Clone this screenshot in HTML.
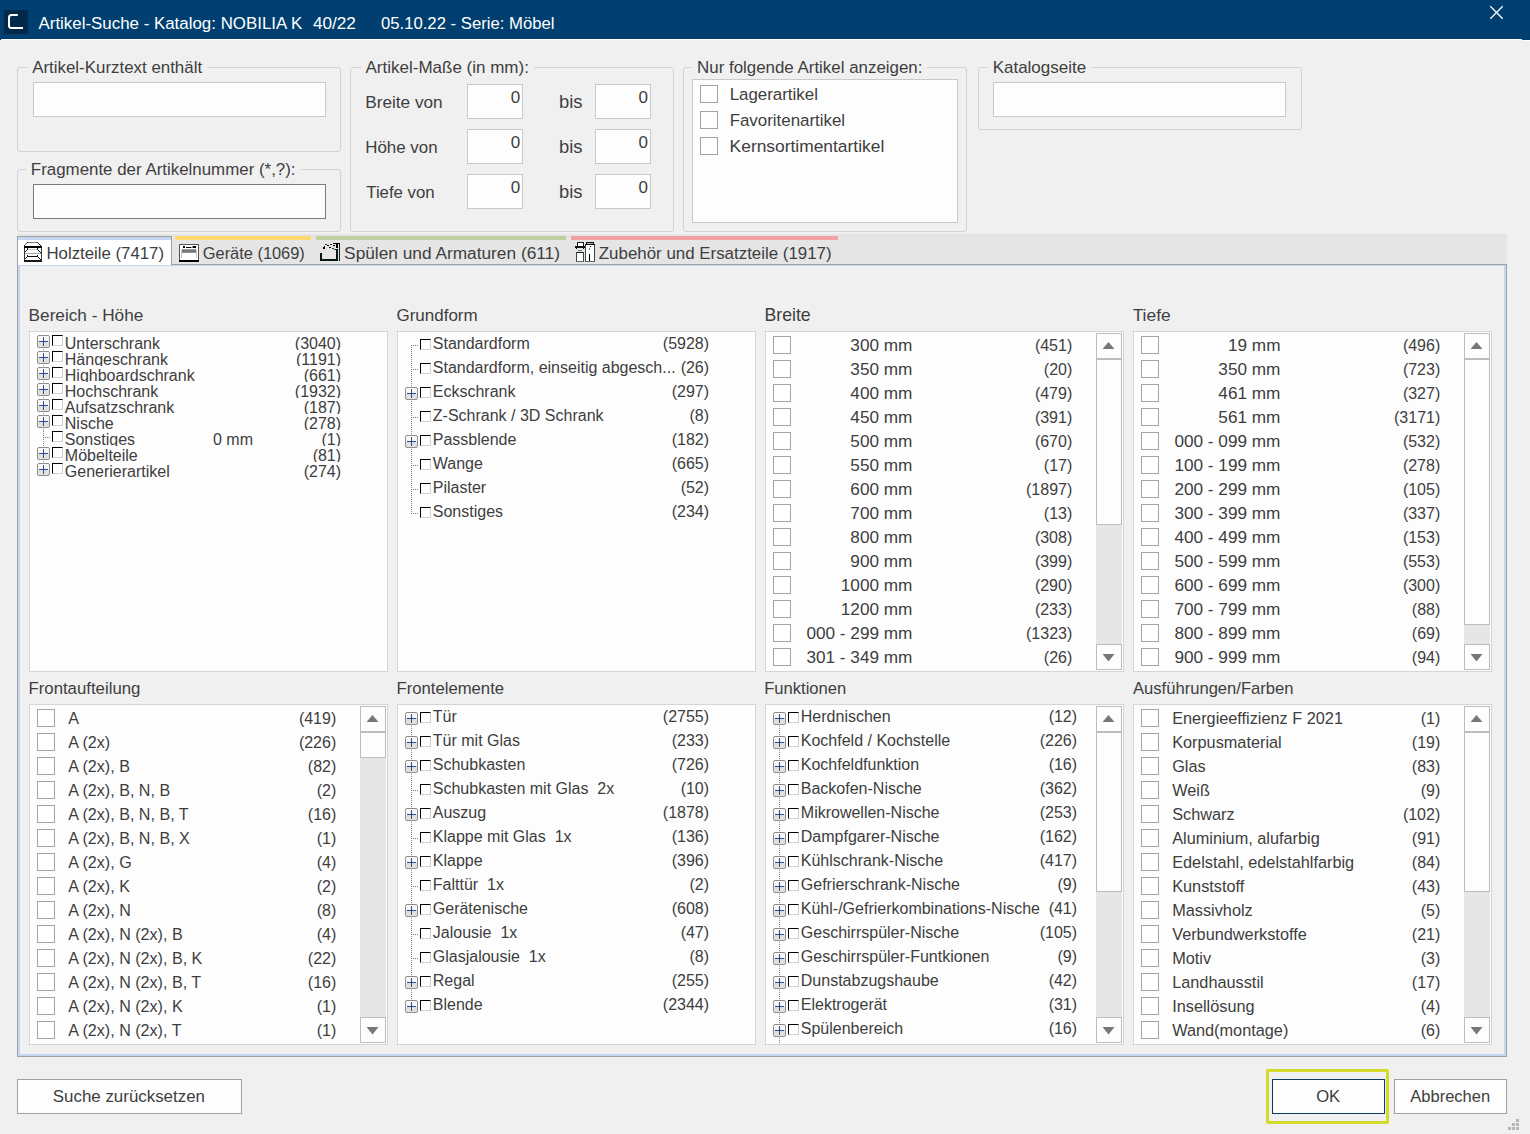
<!DOCTYPE html><html><head><meta charset="utf-8"><title>Artikel-Suche</title><style>
html,body{margin:0;padding:0;}
body{width:1530px;height:1134px;position:relative;overflow:hidden;background:#f0f0f0;font-family:"Liberation Sans", sans-serif;color:#3e3e3e;}
div,svg{position:absolute;}
i{position:absolute;display:block;}
.t{white-space:pre;line-height:20px;}
.pb{width:13px;height:13px;box-sizing:border-box;border:1px solid #8e8e8e;border-radius:2px;
  background:linear-gradient(to bottom,#fafafa 0,#f4f4f4 50%,#dedede 50%,#e2e2e2 100%);}
.ph{left:1px;top:5px;width:9px;height:1px;background:#2f4b8f;}
.pv{left:5px;top:1px;width:1px;height:9px;background:#2f4b8f;}
.tc{width:11px;height:11px;box-sizing:border-box;border-style:solid;border-width:1px;
  border-color:#000 #d0d0d0 #d0d0d0 #000;background:#fff;}
</style></head><body><div style="left:0px;top:0px;width:1530px;height:39px;background:#003f6f"></div>
<div style="left:1px;top:39px;width:1521px;height:1px;background:#ffffff"></div>
<div style="left:0px;top:39px;width:1px;height:1px;background:#003f6f"></div>
<div style="left:1522px;top:39px;width:8px;height:1px;background:#003f6f"></div>
<div style="left:1522px;top:40px;width:8px;height:1px;background:#ffffff"></div>
<div style="left:4px;top:10px;width:24px;height:24px;background:#02294a;border-radius:1px"></div>
<svg style="left:4px;top:10px" width="24" height="24" viewBox="0 0 24 24"><path d="M13.8 5 H7.5 Q5 5 5 7.5 V15.5 Q5 18 7.5 18 H19" fill="none" stroke="#fff" stroke-width="2"/></svg>
<div class="t" style="top:14px;font-size:16.9px;color:#ffffff;left:38.50px;">Artikel-Suche - Katalog: NOBILIA K</div>
<div class="t" style="top:13px;font-size:17.2px;color:#ffffff;left:312.91px;">40/22</div>
<div class="t" style="top:14px;font-size:16.7px;color:#ffffff;left:380.97px;">05.10.22 - Serie: Möbel</div>
<svg style="left:1488px;top:4px" width="18" height="18" viewBox="0 0 18 18"><path d="M2.3 2.3 L14.7 14.7 M14.7 2.3 L2.3 14.7" stroke="#fff" stroke-width="1.3"/></svg>
<div style="left:17px;top:67px;width:324px;height:85px;border:1px solid #d3d3d3;box-sizing:border-box;border-radius:3px;"></div>
<div class="t" style="top:58px;font-size:16.9px;color:#3e3e3e;left:32.20px;background:#f0f0f0;padding:0 5px;margin-left:-5px;">Artikel-Kurztext enthält</div>
<div style="left:17px;top:169px;width:324px;height:63px;border:1px solid #d3d3d3;box-sizing:border-box;border-radius:3px;"></div>
<div class="t" style="top:160px;font-size:16.9px;color:#3e3e3e;left:30.85px;background:#f0f0f0;padding:0 5px;margin-left:-5px;">Fragmente der Artikelnummer (*,?):</div>
<div style="left:350px;top:67px;width:324px;height:165px;border:1px solid #d3d3d3;box-sizing:border-box;border-radius:3px;"></div>
<div class="t" style="top:58px;font-size:17.0px;color:#3e3e3e;left:365.50px;background:#f0f0f0;padding:0 5px;margin-left:-5px;">Artikel-Maße (in mm):</div>
<div style="left:683px;top:67px;width:284px;height:165px;border:1px solid #d3d3d3;box-sizing:border-box;border-radius:3px;"></div>
<div class="t" style="top:58px;font-size:16.9px;color:#3e3e3e;left:697.05px;background:#f0f0f0;padding:0 5px;margin-left:-5px;">Nur folgende Artikel anzeigen:</div>
<div style="left:978px;top:67px;width:324px;height:63px;border:1px solid #d3d3d3;box-sizing:border-box;border-radius:3px;"></div>
<div class="t" style="top:58px;font-size:17px;color:#3e3e3e;left:992.64px;background:#f0f0f0;padding:0 5px;margin-left:-5px;">Katalogseite</div>
<div style="left:33px;top:82px;width:293px;height:35px;border:1px solid #c9c9c9;box-sizing:border-box;background:#fdfdfd;"></div>
<div style="left:33px;top:184px;width:293px;height:35px;border:1px solid #7a7a7a;box-sizing:border-box;background:#fdfdfd;"></div>
<div class="t" style="top:92px;font-size:17.2px;color:#3e3e3e;left:365.22px;">Breite von</div>
<div class="t" style="top:92px;font-size:18.4px;color:#3e3e3e;left:558.95px;">bis</div>
<div style="left:467px;top:84px;width:56px;height:35px;border:1px solid #c9c9c9;box-sizing:border-box;background:#fdfdfd;"></div>
<div style="left:595px;top:84px;width:56px;height:35px;border:1px solid #c9c9c9;box-sizing:border-box;background:#fdfdfd;"></div>
<div class="t" style="top:88px;font-size:17px;color:#3e3e3e;right:1009.84px;text-align:right;">0</div>
<div class="t" style="top:88px;font-size:17px;color:#3e3e3e;right:881.94px;text-align:right;">0</div>
<div class="t" style="top:138px;font-size:16.9px;color:#3e3e3e;left:365.25px;">Höhe von</div>
<div class="t" style="top:137px;font-size:18.4px;color:#3e3e3e;left:558.95px;">bis</div>
<div style="left:467px;top:129px;width:56px;height:35px;border:1px solid #c9c9c9;box-sizing:border-box;background:#fdfdfd;"></div>
<div style="left:595px;top:129px;width:56px;height:35px;border:1px solid #c9c9c9;box-sizing:border-box;background:#fdfdfd;"></div>
<div class="t" style="top:133px;font-size:17px;color:#3e3e3e;right:1009.84px;text-align:right;">0</div>
<div class="t" style="top:133px;font-size:17px;color:#3e3e3e;right:881.94px;text-align:right;">0</div>
<div class="t" style="top:183px;font-size:16.8px;color:#3e3e3e;left:366.26px;">Tiefe von</div>
<div class="t" style="top:182px;font-size:18.4px;color:#3e3e3e;left:558.95px;">bis</div>
<div style="left:467px;top:174px;width:56px;height:35px;border:1px solid #c9c9c9;box-sizing:border-box;background:#fdfdfd;"></div>
<div style="left:595px;top:174px;width:56px;height:35px;border:1px solid #c9c9c9;box-sizing:border-box;background:#fdfdfd;"></div>
<div class="t" style="top:178px;font-size:17px;color:#3e3e3e;right:1009.84px;text-align:right;">0</div>
<div class="t" style="top:178px;font-size:17px;color:#3e3e3e;right:881.94px;text-align:right;">0</div>
<div style="left:692px;top:79px;width:266px;height:144px;border:1px solid #c9c9c9;box-sizing:border-box;background:#fdfdfd;"></div>
<div style="left:700px;top:85px;width:18px;height:18px;border:1px solid #a3a3a3;box-sizing:border-box;background:#ffffff;"></div>
<div class="t" style="top:85px;font-size:16.9px;color:#3e3e3e;left:729.65px;">Lagerartikel</div>
<div style="left:700px;top:111px;width:18px;height:18px;border:1px solid #a3a3a3;box-sizing:border-box;background:#ffffff;"></div>
<div class="t" style="top:111px;font-size:16.9px;color:#3e3e3e;left:729.65px;">Favoritenartikel</div>
<div style="left:700px;top:137px;width:18px;height:18px;border:1px solid #a3a3a3;box-sizing:border-box;background:#ffffff;"></div>
<div class="t" style="top:136px;font-size:17.4px;color:#3e3e3e;left:729.61px;">Kernsortimentartikel</div>
<div style="left:993px;top:82px;width:293px;height:35px;border:1px solid #c9c9c9;box-sizing:border-box;background:#fdfdfd;"></div>
<div style="left:17px;top:234px;width:1490px;height:30px;background:#e5e5e5"></div>
<div style="left:17px;top:264px;width:1490px;height:793px;border:1px solid #a0a0a0;box-sizing:border-box;background:#f0f0f0"></div>
<div style="left:18px;top:265px;width:1488px;height:791px;border-style:solid;border-color:#c5d5f2;border-width:1px 2px 2px 2px;box-sizing:border-box"></div>
<div style="left:17px;top:236px;width:155px;height:29px;border:1px solid #a0a0a0;border-bottom:none;box-sizing:border-box;background:#ffffff"></div>
<div style="left:18px;top:237px;width:153px;height:3px;background:#c5d5f2"></div>
<div style="left:18px;top:264px;width:153px;height:1px;background:#ffffff"></div>
<div style="left:18px;top:265px;width:153px;height:1px;background:#c5d5f2"></div>
<div style="left:175px;top:236px;width:136px;height:4px;background:#ffd86f"></div>
<div style="left:316px;top:236px;width:250px;height:4px;background:#bfcf9f"></div>
<div style="left:571px;top:236px;width:267px;height:4px;background:#f1a1a1"></div>
<div class="t" style="top:244px;font-size:16.8px;color:#3e3e3e;left:46.46px;">Holzteile (7417)</div>
<div class="t" style="top:243px;font-size:16.4px;color:#3e3e3e;left:202.78px;">Geräte (1069)</div>
<div class="t" style="top:243px;font-size:17.3px;color:#3e3e3e;left:344.12px;">Spülen und Armaturen (611)</div>
<div class="t" style="top:244px;font-size:16.9px;color:#3e3e3e;left:598.79px;">Zubehör und Ersatzteile (1917)</div>
<svg style="left:23px;top:241px" width="21" height="22" viewBox="0 0 21 22" shape-rendering="crispEdges"><rect x="2" y="2" width="16" height="18" fill="#ffffff"/><rect x="5" y="1" width="10" height="1" fill="#7a7a7a"/><rect x="4" y="1" width="1" height="1" fill="#111"/><rect x="14" y="1" width="1" height="1" fill="#333"/><rect x="3" y="2" width="1" height="1" fill="#3a7070"/><rect x="2" y="3" width="1" height="1" fill="#3a7070"/><rect x="1" y="4" width="1" height="1" fill="#2a5050"/><rect x="15" y="2" width="1" height="1" fill="#111"/><rect x="16" y="3" width="1" height="1" fill="#111"/><rect x="17" y="4" width="1" height="1" fill="#111"/><rect x="1" y="5" width="18" height="2" fill="#000"/><rect x="1" y="7" width="1" height="13" fill="#333"/><rect x="18" y="7" width="1" height="13" fill="#2a4545"/><rect x="5" y="8" width="10" height="1" fill="#c8c8c8"/><rect x="4" y="7" width="1" height="2" fill="#111"/><rect x="3" y="9" width="1" height="1" fill="#222"/><rect x="2" y="10" width="1" height="1" fill="#333"/><rect x="14" y="7" width="1" height="2" fill="#111"/><rect x="15" y="9" width="1" height="1" fill="#111"/><rect x="16" y="10" width="1" height="1" fill="#111"/><rect x="17" y="11" width="1" height="1" fill="#111"/><rect x="2" y="12" width="16" height="1" fill="#a8a8a8"/><rect x="4" y="14" width="1" height="2" fill="#111"/><rect x="14" y="14" width="1" height="2" fill="#111"/><rect x="5" y="15" width="9" height="1" fill="#111"/><rect x="3" y="16" width="1" height="1" fill="#222"/><rect x="2" y="17" width="1" height="1" fill="#333"/><rect x="15" y="16" width="1" height="1" fill="#111"/><rect x="16" y="17" width="1" height="1" fill="#111"/><rect x="17" y="18" width="1" height="1" fill="#111"/><rect x="1" y="19" width="18" height="2" fill="#1a1a1a"/></svg>
<svg style="left:179px;top:244px" width="20" height="18" viewBox="0 0 20 18"><rect x="0.5" y="0.5" width="19" height="16" fill="#fff" stroke="#555"/><rect x="4" y="2" width="2" height="2" fill="#000"/><rect x="7" y="3" width="5.5" height="1" fill="#000"/><rect x="13.5" y="2" width="3.5" height="2" fill="#000"/><rect x="3" y="5.3" width="14" height="3.5" fill="#777"/><path d="M2.5 5.5 V14 M17.5 5.5 V14" stroke="#ccc"/><rect x="0" y="16" width="20" height="2" fill="#000"/></svg>
<svg style="left:319px;top:242px" width="23" height="21" viewBox="0 0 23 21" shape-rendering="crispEdges"><rect x="1" y="11" width="2" height="8" fill="#061616"/><rect x="1" y="17" width="18" height="2" fill="#061616"/><rect x="17" y="7" width="2" height="12" fill="#061616"/><rect x="20" y="1" width="1" height="18" fill="#0a1f1f"/><rect x="14" y="1" width="7" height="1" fill="#000"/><rect x="17" y="2" width="2" height="4" fill="#000"/><rect x="4" y="5" width="2" height="2" fill="#000"/><rect x="5" y="4" width="1" height="1" fill="#333"/><rect x="6" y="2" width="2" height="1" fill="#1a4040"/><rect x="8" y="3" width="2" height="1" fill="#000"/><rect x="11" y="2" width="2" height="1" fill="#222"/><rect x="14" y="3" width="2" height="1" fill="#000"/><rect x="10" y="5" width="2" height="1" fill="#000"/><rect x="13" y="6" width="2" height="1" fill="#1a3a3a"/><rect x="15" y="7" width="2" height="1" fill="#1a3a3a"/></svg>
<svg style="left:574px;top:241px" width="23" height="23" viewBox="0 0 23 23" shape-rendering="crispEdges"><rect x="3" y="1" width="7" height="1" fill="#222"/><rect x="3" y="2" width="1" height="3" fill="#111"/><rect x="9" y="2" width="1" height="3" fill="#111"/><rect x="4" y="2" width="5" height="3" fill="#fff"/><rect x="1" y="5" width="10" height="2" fill="#111"/><rect x="2" y="7" width="1" height="1" fill="#111"/><rect x="9" y="7" width="1" height="1" fill="#111"/><rect x="4" y="9" width="4" height="1" fill="#5a8080"/><rect x="2" y="11" width="8" height="10" fill="#fff"/><rect x="2" y="11" width="8" height="1" fill="#111"/><rect x="2" y="11" width="1" height="10" fill="#354848"/><rect x="9" y="11" width="1" height="10" fill="#354848"/><rect x="2" y="20" width="8" height="1" fill="#606a6a"/><rect x="11" y="3" width="10" height="18" fill="#fff"/><rect x="11" y="3" width="1" height="18" fill="#354848"/><rect x="20" y="3" width="1" height="18" fill="#354848"/><rect x="11" y="3" width="10" height="1" fill="#111"/><rect x="11" y="20" width="10" height="1" fill="#606a6a"/><rect x="12" y="1" width="8" height="1" fill="#111"/><rect x="12" y="2" width="1" height="1" fill="#111"/><rect x="19" y="2" width="1" height="1" fill="#111"/><rect x="13" y="2" width="6" height="1" fill="#aaa"/><rect x="16" y="5" width="1" height="1" fill="#000"/><rect x="15" y="7" width="1" height="2" fill="#777"/><rect x="15" y="13" width="1" height="7" fill="#000"/></svg>
<div class="t" style="top:305px;font-size:17.2px;color:#3e3e3e;left:28.62px;">Bereich - Höhe</div>
<div class="t" style="top:679px;font-size:16.8px;color:#3e3e3e;left:28.46px;">Frontaufteilung</div>
<div style="left:29px;top:331px;width:359px;height:341px;border:1px solid #d5d5d5;box-sizing:border-box;background:#fdfdfd;"></div>
<div style="left:29px;top:704px;width:359px;height:341px;border:1px solid #d5d5d5;box-sizing:border-box;background:#fdfdfd;"></div>
<div class="t" style="top:306px;font-size:17.0px;color:#3e3e3e;left:396.45px;">Grundform</div>
<div class="t" style="top:679px;font-size:16.7px;color:#3e3e3e;left:396.46px;">Frontelemente</div>
<div style="left:397px;top:331px;width:359px;height:341px;border:1px solid #d5d5d5;box-sizing:border-box;background:#fdfdfd;"></div>
<div style="left:397px;top:704px;width:359px;height:341px;border:1px solid #d5d5d5;box-sizing:border-box;background:#fdfdfd;"></div>
<div class="t" style="top:305px;font-size:17.7px;color:#3e3e3e;left:764.48px;">Breite</div>
<div class="t" style="top:679px;font-size:16.6px;color:#3e3e3e;left:764.17px;">Funktionen</div>
<div style="left:765px;top:331px;width:359px;height:341px;border:1px solid #d5d5d5;box-sizing:border-box;background:#fdfdfd;"></div>
<div style="left:765px;top:704px;width:359px;height:341px;border:1px solid #d5d5d5;box-sizing:border-box;background:#fdfdfd;"></div>
<div class="t" style="top:305px;font-size:17.4px;color:#3e3e3e;left:1132.65px;">Tiefe</div>
<div class="t" style="top:679px;font-size:16.6px;color:#3e3e3e;left:1133.00px;">Ausführungen/Farben</div>
<div style="left:1133px;top:331px;width:359px;height:341px;border:1px solid #d5d5d5;box-sizing:border-box;background:#fdfdfd;"></div>
<div style="left:1133px;top:704px;width:359px;height:341px;border:1px solid #d5d5d5;box-sizing:border-box;background:#fdfdfd;"></div>
<div style="left:43px;top:341px;width:1px;height:129px;background:repeating-linear-gradient(to bottom,#808080 0 1px,transparent 1px 2px)"></div>
<div style="left:30px;top:334px;width:357px;height:16px;overflow:hidden">
<div class="pb" style="left:7px;top:1px"><i class="ph"></i><i class="pv"></i></div>
<div class="tc" style="left:22px;top:1px"></div>
<div class="t" style="left:34.80px;top:0px;font-size:16px">Unterschrank</div>
<div class="t" style="right:45.93px;top:0px;font-size:16px;text-align:right">(3040)</div>
</div>
<div style="left:30px;top:350px;width:357px;height:16px;overflow:hidden">
<div class="pb" style="left:7px;top:1px"><i class="ph"></i><i class="pv"></i></div>
<div class="tc" style="left:22px;top:1px"></div>
<div class="t" style="left:34.80px;top:0px;font-size:16px">Hängeschrank</div>
<div class="t" style="right:45.92px;top:0px;font-size:16px;text-align:right">(1191)</div>
</div>
<div style="left:30px;top:366px;width:357px;height:16px;overflow:hidden">
<div class="pb" style="left:7px;top:1px"><i class="ph"></i><i class="pv"></i></div>
<div class="tc" style="left:22px;top:1px"></div>
<div class="t" style="left:34.80px;top:0px;font-size:16px">Highboardschrank</div>
<div class="t" style="right:45.95px;top:0px;font-size:16px;text-align:right">(661)</div>
</div>
<div style="left:30px;top:382px;width:357px;height:16px;overflow:hidden">
<div class="pb" style="left:7px;top:1px"><i class="ph"></i><i class="pv"></i></div>
<div class="tc" style="left:22px;top:1px"></div>
<div class="t" style="left:34.80px;top:0px;font-size:16px">Hochschrank</div>
<div class="t" style="right:45.93px;top:0px;font-size:16px;text-align:right">(1932)</div>
</div>
<div style="left:30px;top:398px;width:357px;height:16px;overflow:hidden">
<div class="pb" style="left:7px;top:1px"><i class="ph"></i><i class="pv"></i></div>
<div class="tc" style="left:22px;top:1px"></div>
<div class="t" style="left:34.80px;top:0px;font-size:16px">Aufsatzschrank</div>
<div class="t" style="right:45.95px;top:0px;font-size:16px;text-align:right">(187)</div>
</div>
<div style="left:30px;top:414px;width:357px;height:16px;overflow:hidden">
<div class="pb" style="left:7px;top:1px"><i class="ph"></i><i class="pv"></i></div>
<div class="tc" style="left:22px;top:1px"></div>
<div class="t" style="left:34.80px;top:0px;font-size:16px">Nische</div>
<div class="t" style="right:45.95px;top:0px;font-size:16px;text-align:right">(278)</div>
</div>
<div style="left:30px;top:430px;width:357px;height:16px;overflow:hidden">
<div style="left:13px;top:7px;width:8px;height:1px;background:repeating-linear-gradient(to right,#808080 0 1px,transparent 1px 2px)"></div>
<div class="tc" style="left:22px;top:1px"></div>
<div class="t" style="left:34.80px;top:0px;font-size:16px">Sonstiges</div>
<div class="t" style="right:45.94px;top:0px;font-size:16px;text-align:right">(1)</div>
<div class="t" style="left:183px;top:0px;font-size:16px">0 mm</div>
</div>
<div style="left:30px;top:446px;width:357px;height:16px;overflow:hidden">
<div class="pb" style="left:7px;top:1px"><i class="ph"></i><i class="pv"></i></div>
<div class="tc" style="left:22px;top:1px"></div>
<div class="t" style="left:34.80px;top:0px;font-size:16px">Möbelteile</div>
<div class="t" style="right:45.93px;top:0px;font-size:16px;text-align:right">(81)</div>
</div>
<div style="left:30px;top:462px;width:357px;height:22px;overflow:hidden">
<div class="pb" style="left:7px;top:1px"><i class="ph"></i><i class="pv"></i></div>
<div class="tc" style="left:22px;top:1px"></div>
<div class="t" style="left:34.80px;top:0px;font-size:16px">Generierartikel</div>
<div class="t" style="right:45.95px;top:0px;font-size:16px;text-align:right">(274)</div>
</div>
<div style="left:411px;top:345px;width:1px;height:169px;background:repeating-linear-gradient(to bottom,#808080 0 1px,transparent 1px 2px)"></div>
<div style="left:411px;top:345px;width:8px;height:1px;background:repeating-linear-gradient(to right,#808080 0 1px,transparent 1px 2px)"></div>
<div class="tc" style="left:420px;top:339px"></div>
<div class="t" style="top:334px;left:432.80px;font-size:16px;color:#3e3e3e;">Standardform</div>
<div class="t" style="top:334px;font-size:16px;color:#3e3e3e;right:820.93px;text-align:right;">(5928)</div>
<div style="left:411px;top:369px;width:8px;height:1px;background:repeating-linear-gradient(to right,#808080 0 1px,transparent 1px 2px)"></div>
<div class="tc" style="left:420px;top:363px"></div>
<div class="t" style="top:358px;left:432.80px;font-size:16px;color:#3e3e3e;">Standardform, einseitig abgesch...</div>
<div class="t" style="top:358px;font-size:16px;color:#3e3e3e;right:820.93px;text-align:right;">(26)</div>
<div class="pb" style="left:405px;top:387px"><i class="ph"></i><i class="pv"></i></div>
<div class="tc" style="left:420px;top:387px"></div>
<div class="t" style="top:382px;left:432.80px;font-size:16px;color:#3e3e3e;">Eckschrank</div>
<div class="t" style="top:382px;font-size:16px;color:#3e3e3e;right:820.95px;text-align:right;">(297)</div>
<div style="left:411px;top:417px;width:8px;height:1px;background:repeating-linear-gradient(to right,#808080 0 1px,transparent 1px 2px)"></div>
<div class="tc" style="left:420px;top:411px"></div>
<div class="t" style="top:406px;left:432.80px;font-size:16px;color:#3e3e3e;">Z-Schrank / 3D Schrank</div>
<div class="t" style="top:406px;font-size:16px;color:#3e3e3e;right:820.94px;text-align:right;">(8)</div>
<div class="pb" style="left:405px;top:435px"><i class="ph"></i><i class="pv"></i></div>
<div class="tc" style="left:420px;top:435px"></div>
<div class="t" style="top:430px;left:432.80px;font-size:16px;color:#3e3e3e;">Passblende</div>
<div class="t" style="top:430px;font-size:16px;color:#3e3e3e;right:820.95px;text-align:right;">(182)</div>
<div style="left:411px;top:465px;width:8px;height:1px;background:repeating-linear-gradient(to right,#808080 0 1px,transparent 1px 2px)"></div>
<div class="tc" style="left:420px;top:459px"></div>
<div class="t" style="top:454px;left:432.80px;font-size:16px;color:#3e3e3e;">Wange</div>
<div class="t" style="top:454px;font-size:16px;color:#3e3e3e;right:820.95px;text-align:right;">(665)</div>
<div style="left:411px;top:489px;width:8px;height:1px;background:repeating-linear-gradient(to right,#808080 0 1px,transparent 1px 2px)"></div>
<div class="tc" style="left:420px;top:483px"></div>
<div class="t" style="top:478px;left:432.80px;font-size:16px;color:#3e3e3e;">Pilaster</div>
<div class="t" style="top:478px;font-size:16px;color:#3e3e3e;right:820.93px;text-align:right;">(52)</div>
<div style="left:411px;top:513px;width:8px;height:1px;background:repeating-linear-gradient(to right,#808080 0 1px,transparent 1px 2px)"></div>
<div class="tc" style="left:420px;top:507px"></div>
<div class="t" style="top:502px;left:432.80px;font-size:16px;color:#3e3e3e;">Sonstiges</div>
<div class="t" style="top:502px;font-size:16px;color:#3e3e3e;right:820.95px;text-align:right;">(234)</div>
<div style="left:773px;top:336px;width:18px;height:18px;border:1px solid #a3a3a3;box-sizing:border-box;background:#ffffff;"></div>
<div class="t" style="top:335px;font-size:17.2px;color:#3e3e3e;right:617.58px;text-align:right;">300 mm</div>
<div class="t" style="top:336px;font-size:16px;color:#3e3e3e;right:457.75px;text-align:right;">(451)</div>
<div style="left:773px;top:360px;width:18px;height:18px;border:1px solid #a3a3a3;box-sizing:border-box;background:#ffffff;"></div>
<div class="t" style="top:359px;font-size:17.2px;color:#3e3e3e;right:617.58px;text-align:right;">350 mm</div>
<div class="t" style="top:360px;font-size:16px;color:#3e3e3e;right:457.73px;text-align:right;">(20)</div>
<div style="left:773px;top:384px;width:18px;height:18px;border:1px solid #a3a3a3;box-sizing:border-box;background:#ffffff;"></div>
<div class="t" style="top:383px;font-size:17.2px;color:#3e3e3e;right:617.58px;text-align:right;">400 mm</div>
<div class="t" style="top:384px;font-size:16px;color:#3e3e3e;right:457.75px;text-align:right;">(479)</div>
<div style="left:773px;top:408px;width:18px;height:18px;border:1px solid #a3a3a3;box-sizing:border-box;background:#ffffff;"></div>
<div class="t" style="top:407px;font-size:17.2px;color:#3e3e3e;right:617.58px;text-align:right;">450 mm</div>
<div class="t" style="top:408px;font-size:16px;color:#3e3e3e;right:457.75px;text-align:right;">(391)</div>
<div style="left:773px;top:432px;width:18px;height:18px;border:1px solid #a3a3a3;box-sizing:border-box;background:#ffffff;"></div>
<div class="t" style="top:431px;font-size:17.2px;color:#3e3e3e;right:617.58px;text-align:right;">500 mm</div>
<div class="t" style="top:432px;font-size:16px;color:#3e3e3e;right:457.75px;text-align:right;">(670)</div>
<div style="left:773px;top:456px;width:18px;height:18px;border:1px solid #a3a3a3;box-sizing:border-box;background:#ffffff;"></div>
<div class="t" style="top:455px;font-size:17.2px;color:#3e3e3e;right:617.58px;text-align:right;">550 mm</div>
<div class="t" style="top:456px;font-size:16px;color:#3e3e3e;right:457.73px;text-align:right;">(17)</div>
<div style="left:773px;top:480px;width:18px;height:18px;border:1px solid #a3a3a3;box-sizing:border-box;background:#ffffff;"></div>
<div class="t" style="top:479px;font-size:17.2px;color:#3e3e3e;right:617.58px;text-align:right;">600 mm</div>
<div class="t" style="top:480px;font-size:16px;color:#3e3e3e;right:457.73px;text-align:right;">(1897)</div>
<div style="left:773px;top:504px;width:18px;height:18px;border:1px solid #a3a3a3;box-sizing:border-box;background:#ffffff;"></div>
<div class="t" style="top:503px;font-size:17.2px;color:#3e3e3e;right:617.58px;text-align:right;">700 mm</div>
<div class="t" style="top:504px;font-size:16px;color:#3e3e3e;right:457.73px;text-align:right;">(13)</div>
<div style="left:773px;top:528px;width:18px;height:18px;border:1px solid #a3a3a3;box-sizing:border-box;background:#ffffff;"></div>
<div class="t" style="top:527px;font-size:17.2px;color:#3e3e3e;right:617.58px;text-align:right;">800 mm</div>
<div class="t" style="top:528px;font-size:16px;color:#3e3e3e;right:457.75px;text-align:right;">(308)</div>
<div style="left:773px;top:552px;width:18px;height:18px;border:1px solid #a3a3a3;box-sizing:border-box;background:#ffffff;"></div>
<div class="t" style="top:551px;font-size:17.2px;color:#3e3e3e;right:617.58px;text-align:right;">900 mm</div>
<div class="t" style="top:552px;font-size:16px;color:#3e3e3e;right:457.75px;text-align:right;">(399)</div>
<div style="left:773px;top:576px;width:18px;height:18px;border:1px solid #a3a3a3;box-sizing:border-box;background:#ffffff;"></div>
<div class="t" style="top:575px;font-size:17.2px;color:#3e3e3e;right:617.56px;text-align:right;">1000 mm</div>
<div class="t" style="top:576px;font-size:16px;color:#3e3e3e;right:457.75px;text-align:right;">(290)</div>
<div style="left:773px;top:600px;width:18px;height:18px;border:1px solid #a3a3a3;box-sizing:border-box;background:#ffffff;"></div>
<div class="t" style="top:599px;font-size:17.2px;color:#3e3e3e;right:617.56px;text-align:right;">1200 mm</div>
<div class="t" style="top:600px;font-size:16px;color:#3e3e3e;right:457.75px;text-align:right;">(233)</div>
<div style="left:773px;top:624px;width:18px;height:18px;border:1px solid #a3a3a3;box-sizing:border-box;background:#ffffff;"></div>
<div class="t" style="top:623px;font-size:17.2px;color:#3e3e3e;right:617.59px;text-align:right;">000 - 299 mm</div>
<div class="t" style="top:624px;font-size:16px;color:#3e3e3e;right:457.73px;text-align:right;">(1323)</div>
<div style="left:773px;top:648px;width:18px;height:18px;border:1px solid #a3a3a3;box-sizing:border-box;background:#ffffff;"></div>
<div class="t" style="top:647px;font-size:17.2px;color:#3e3e3e;right:617.59px;text-align:right;">301 - 349 mm</div>
<div class="t" style="top:648px;font-size:16px;color:#3e3e3e;right:457.73px;text-align:right;">(26)</div>
<div style="left:1096px;top:359px;width:26px;height:285px;background:#e6e6e6"></div>
<div style="left:1096px;top:333px;width:26px;height:26px;border:1px solid #bcbcbc;box-sizing:border-box;background:#fdfdfd;"></div>
<div style="left:1096px;top:359px;width:26px;height:166px;border:1px solid #bcbcbc;box-sizing:border-box;background:#fdfdfd;"></div>
<div style="left:1096px;top:644px;width:26px;height:26px;border:1px solid #bcbcbc;box-sizing:border-box;background:#fdfdfd;"></div>
<svg style="left:1096px;top:333px" width="26" height="26" viewBox="0 0 26 26"><path d="M6.5 16 L12.5 9 L18.5 16 Z" fill="#777"/></svg>
<svg style="left:1096px;top:644px" width="26" height="26" viewBox="0 0 26 26"><path d="M6.5 10 L12.5 17.5 L18.5 10 Z" fill="#777"/></svg>
<div style="left:1141px;top:336px;width:18px;height:18px;border:1px solid #a3a3a3;box-sizing:border-box;background:#ffffff;"></div>
<div class="t" style="top:335px;font-size:17.2px;color:#3e3e3e;right:249.56px;text-align:right;">19 mm</div>
<div class="t" style="top:336px;font-size:16px;color:#3e3e3e;right:89.75px;text-align:right;">(496)</div>
<div style="left:1141px;top:360px;width:18px;height:18px;border:1px solid #a3a3a3;box-sizing:border-box;background:#ffffff;"></div>
<div class="t" style="top:359px;font-size:17.2px;color:#3e3e3e;right:249.58px;text-align:right;">350 mm</div>
<div class="t" style="top:360px;font-size:16px;color:#3e3e3e;right:89.75px;text-align:right;">(723)</div>
<div style="left:1141px;top:384px;width:18px;height:18px;border:1px solid #a3a3a3;box-sizing:border-box;background:#ffffff;"></div>
<div class="t" style="top:383px;font-size:17.2px;color:#3e3e3e;right:249.58px;text-align:right;">461 mm</div>
<div class="t" style="top:384px;font-size:16px;color:#3e3e3e;right:89.75px;text-align:right;">(327)</div>
<div style="left:1141px;top:408px;width:18px;height:18px;border:1px solid #a3a3a3;box-sizing:border-box;background:#ffffff;"></div>
<div class="t" style="top:407px;font-size:17.2px;color:#3e3e3e;right:249.58px;text-align:right;">561 mm</div>
<div class="t" style="top:408px;font-size:16px;color:#3e3e3e;right:89.73px;text-align:right;">(3171)</div>
<div style="left:1141px;top:432px;width:18px;height:18px;border:1px solid #a3a3a3;box-sizing:border-box;background:#ffffff;"></div>
<div class="t" style="top:431px;font-size:17.2px;color:#3e3e3e;right:249.59px;text-align:right;">000 - 099 mm</div>
<div class="t" style="top:432px;font-size:16px;color:#3e3e3e;right:89.75px;text-align:right;">(532)</div>
<div style="left:1141px;top:456px;width:18px;height:18px;border:1px solid #a3a3a3;box-sizing:border-box;background:#ffffff;"></div>
<div class="t" style="top:455px;font-size:17.2px;color:#3e3e3e;right:249.59px;text-align:right;">100 - 199 mm</div>
<div class="t" style="top:456px;font-size:16px;color:#3e3e3e;right:89.75px;text-align:right;">(278)</div>
<div style="left:1141px;top:480px;width:18px;height:18px;border:1px solid #a3a3a3;box-sizing:border-box;background:#ffffff;"></div>
<div class="t" style="top:479px;font-size:17.2px;color:#3e3e3e;right:249.59px;text-align:right;">200 - 299 mm</div>
<div class="t" style="top:480px;font-size:16px;color:#3e3e3e;right:89.75px;text-align:right;">(105)</div>
<div style="left:1141px;top:504px;width:18px;height:18px;border:1px solid #a3a3a3;box-sizing:border-box;background:#ffffff;"></div>
<div class="t" style="top:503px;font-size:17.2px;color:#3e3e3e;right:249.59px;text-align:right;">300 - 399 mm</div>
<div class="t" style="top:504px;font-size:16px;color:#3e3e3e;right:89.75px;text-align:right;">(337)</div>
<div style="left:1141px;top:528px;width:18px;height:18px;border:1px solid #a3a3a3;box-sizing:border-box;background:#ffffff;"></div>
<div class="t" style="top:527px;font-size:17.2px;color:#3e3e3e;right:249.59px;text-align:right;">400 - 499 mm</div>
<div class="t" style="top:528px;font-size:16px;color:#3e3e3e;right:89.75px;text-align:right;">(153)</div>
<div style="left:1141px;top:552px;width:18px;height:18px;border:1px solid #a3a3a3;box-sizing:border-box;background:#ffffff;"></div>
<div class="t" style="top:551px;font-size:17.2px;color:#3e3e3e;right:249.59px;text-align:right;">500 - 599 mm</div>
<div class="t" style="top:552px;font-size:16px;color:#3e3e3e;right:89.75px;text-align:right;">(553)</div>
<div style="left:1141px;top:576px;width:18px;height:18px;border:1px solid #a3a3a3;box-sizing:border-box;background:#ffffff;"></div>
<div class="t" style="top:575px;font-size:17.2px;color:#3e3e3e;right:249.59px;text-align:right;">600 - 699 mm</div>
<div class="t" style="top:576px;font-size:16px;color:#3e3e3e;right:89.75px;text-align:right;">(300)</div>
<div style="left:1141px;top:600px;width:18px;height:18px;border:1px solid #a3a3a3;box-sizing:border-box;background:#ffffff;"></div>
<div class="t" style="top:599px;font-size:17.2px;color:#3e3e3e;right:249.59px;text-align:right;">700 - 799 mm</div>
<div class="t" style="top:600px;font-size:16px;color:#3e3e3e;right:89.73px;text-align:right;">(88)</div>
<div style="left:1141px;top:624px;width:18px;height:18px;border:1px solid #a3a3a3;box-sizing:border-box;background:#ffffff;"></div>
<div class="t" style="top:623px;font-size:17.2px;color:#3e3e3e;right:249.59px;text-align:right;">800 - 899 mm</div>
<div class="t" style="top:624px;font-size:16px;color:#3e3e3e;right:89.73px;text-align:right;">(69)</div>
<div style="left:1141px;top:648px;width:18px;height:18px;border:1px solid #a3a3a3;box-sizing:border-box;background:#ffffff;"></div>
<div class="t" style="top:647px;font-size:17.2px;color:#3e3e3e;right:249.59px;text-align:right;">900 - 999 mm</div>
<div class="t" style="top:648px;font-size:16px;color:#3e3e3e;right:89.73px;text-align:right;">(94)</div>
<div style="left:1464px;top:359px;width:26px;height:285px;background:#e6e6e6"></div>
<div style="left:1464px;top:333px;width:26px;height:26px;border:1px solid #bcbcbc;box-sizing:border-box;background:#fdfdfd;"></div>
<div style="left:1464px;top:359px;width:26px;height:266px;border:1px solid #bcbcbc;box-sizing:border-box;background:#fdfdfd;"></div>
<div style="left:1464px;top:644px;width:26px;height:26px;border:1px solid #bcbcbc;box-sizing:border-box;background:#fdfdfd;"></div>
<svg style="left:1464px;top:333px" width="26" height="26" viewBox="0 0 26 26"><path d="M6.5 16 L12.5 9 L18.5 16 Z" fill="#777"/></svg>
<svg style="left:1464px;top:644px" width="26" height="26" viewBox="0 0 26 26"><path d="M6.5 10 L12.5 17.5 L18.5 10 Z" fill="#777"/></svg>
<div style="left:37px;top:709px;width:18px;height:18px;border:1px solid #a3a3a3;box-sizing:border-box;background:#ffffff;"></div>
<div class="t" style="top:708px;left:68.20px;font-size:16.1px;color:#3e3e3e;">A</div>
<div class="t" style="top:709px;font-size:16px;color:#3e3e3e;right:1193.75px;text-align:right;">(419)</div>
<div style="left:37px;top:733px;width:18px;height:18px;border:1px solid #a3a3a3;box-sizing:border-box;background:#ffffff;"></div>
<div class="t" style="top:732px;left:68.20px;font-size:16.1px;color:#3e3e3e;">A (2x)</div>
<div class="t" style="top:733px;font-size:16px;color:#3e3e3e;right:1193.75px;text-align:right;">(226)</div>
<div style="left:37px;top:757px;width:18px;height:18px;border:1px solid #a3a3a3;box-sizing:border-box;background:#ffffff;"></div>
<div class="t" style="top:756px;left:68.20px;font-size:16.1px;color:#3e3e3e;">A (2x), B</div>
<div class="t" style="top:757px;font-size:16px;color:#3e3e3e;right:1193.73px;text-align:right;">(82)</div>
<div style="left:37px;top:781px;width:18px;height:18px;border:1px solid #a3a3a3;box-sizing:border-box;background:#ffffff;"></div>
<div class="t" style="top:780px;left:68.20px;font-size:16.1px;color:#3e3e3e;">A (2x), B, N, B</div>
<div class="t" style="top:781px;font-size:16px;color:#3e3e3e;right:1193.75px;text-align:right;">(2)</div>
<div style="left:37px;top:805px;width:18px;height:18px;border:1px solid #a3a3a3;box-sizing:border-box;background:#ffffff;"></div>
<div class="t" style="top:804px;left:68.20px;font-size:16.1px;color:#3e3e3e;">A (2x), B, N, B, T</div>
<div class="t" style="top:805px;font-size:16px;color:#3e3e3e;right:1193.73px;text-align:right;">(16)</div>
<div style="left:37px;top:829px;width:18px;height:18px;border:1px solid #a3a3a3;box-sizing:border-box;background:#ffffff;"></div>
<div class="t" style="top:828px;left:68.20px;font-size:16.1px;color:#3e3e3e;">A (2x), B, N, B, X</div>
<div class="t" style="top:829px;font-size:16px;color:#3e3e3e;right:1193.75px;text-align:right;">(1)</div>
<div style="left:37px;top:853px;width:18px;height:18px;border:1px solid #a3a3a3;box-sizing:border-box;background:#ffffff;"></div>
<div class="t" style="top:852px;left:68.20px;font-size:16.1px;color:#3e3e3e;">A (2x), G</div>
<div class="t" style="top:853px;font-size:16px;color:#3e3e3e;right:1193.75px;text-align:right;">(4)</div>
<div style="left:37px;top:877px;width:18px;height:18px;border:1px solid #a3a3a3;box-sizing:border-box;background:#ffffff;"></div>
<div class="t" style="top:876px;left:68.20px;font-size:16.1px;color:#3e3e3e;">A (2x), K</div>
<div class="t" style="top:877px;font-size:16px;color:#3e3e3e;right:1193.75px;text-align:right;">(2)</div>
<div style="left:37px;top:901px;width:18px;height:18px;border:1px solid #a3a3a3;box-sizing:border-box;background:#ffffff;"></div>
<div class="t" style="top:900px;left:68.20px;font-size:16.1px;color:#3e3e3e;">A (2x), N</div>
<div class="t" style="top:901px;font-size:16px;color:#3e3e3e;right:1193.75px;text-align:right;">(8)</div>
<div style="left:37px;top:925px;width:18px;height:18px;border:1px solid #a3a3a3;box-sizing:border-box;background:#ffffff;"></div>
<div class="t" style="top:924px;left:68.20px;font-size:16.1px;color:#3e3e3e;">A (2x), N (2x), B</div>
<div class="t" style="top:925px;font-size:16px;color:#3e3e3e;right:1193.75px;text-align:right;">(4)</div>
<div style="left:37px;top:949px;width:18px;height:18px;border:1px solid #a3a3a3;box-sizing:border-box;background:#ffffff;"></div>
<div class="t" style="top:948px;left:68.20px;font-size:16.1px;color:#3e3e3e;">A (2x), N (2x), B, K</div>
<div class="t" style="top:949px;font-size:16px;color:#3e3e3e;right:1193.73px;text-align:right;">(22)</div>
<div style="left:37px;top:973px;width:18px;height:18px;border:1px solid #a3a3a3;box-sizing:border-box;background:#ffffff;"></div>
<div class="t" style="top:972px;left:68.20px;font-size:16.1px;color:#3e3e3e;">A (2x), N (2x), B, T</div>
<div class="t" style="top:973px;font-size:16px;color:#3e3e3e;right:1193.73px;text-align:right;">(16)</div>
<div style="left:37px;top:997px;width:18px;height:18px;border:1px solid #a3a3a3;box-sizing:border-box;background:#ffffff;"></div>
<div class="t" style="top:996px;left:68.20px;font-size:16.1px;color:#3e3e3e;">A (2x), N (2x), K</div>
<div class="t" style="top:997px;font-size:16px;color:#3e3e3e;right:1193.75px;text-align:right;">(1)</div>
<div style="left:37px;top:1021px;width:18px;height:18px;border:1px solid #a3a3a3;box-sizing:border-box;background:#ffffff;"></div>
<div class="t" style="top:1020px;left:68.20px;font-size:16.1px;color:#3e3e3e;">A (2x), N (2x), T</div>
<div class="t" style="top:1021px;font-size:16px;color:#3e3e3e;right:1193.75px;text-align:right;">(1)</div>
<div style="left:360px;top:732px;width:26px;height:285px;background:#e6e6e6"></div>
<div style="left:360px;top:706px;width:26px;height:26px;border:1px solid #bcbcbc;box-sizing:border-box;background:#fdfdfd;"></div>
<div style="left:360px;top:732px;width:26px;height:26px;border:1px solid #bcbcbc;box-sizing:border-box;background:#fdfdfd;"></div>
<div style="left:360px;top:1017px;width:26px;height:26px;border:1px solid #bcbcbc;box-sizing:border-box;background:#fdfdfd;"></div>
<svg style="left:360px;top:706px" width="26" height="26" viewBox="0 0 26 26"><path d="M6.5 16 L12.5 9 L18.5 16 Z" fill="#777"/></svg>
<svg style="left:360px;top:1017px" width="26" height="26" viewBox="0 0 26 26"><path d="M6.5 10 L12.5 17.5 L18.5 10 Z" fill="#777"/></svg>
<div style="left:411px;top:718px;width:1px;height:289px;background:repeating-linear-gradient(to bottom,#808080 0 1px,transparent 1px 2px)"></div>
<div class="pb" style="left:405px;top:712px"><i class="ph"></i><i class="pv"></i></div>
<div class="tc" style="left:420px;top:712px"></div>
<div class="t" style="top:707px;left:432.80px;font-size:16px;color:#3e3e3e;">Tür</div>
<div class="t" style="top:707px;font-size:16px;color:#3e3e3e;right:820.93px;text-align:right;">(2755)</div>
<div class="pb" style="left:405px;top:736px"><i class="ph"></i><i class="pv"></i></div>
<div class="tc" style="left:420px;top:736px"></div>
<div class="t" style="top:731px;left:432.80px;font-size:16px;color:#3e3e3e;">Tür mit Glas</div>
<div class="t" style="top:731px;font-size:16px;color:#3e3e3e;right:820.95px;text-align:right;">(233)</div>
<div class="pb" style="left:405px;top:760px"><i class="ph"></i><i class="pv"></i></div>
<div class="tc" style="left:420px;top:760px"></div>
<div class="t" style="top:755px;left:432.80px;font-size:16px;color:#3e3e3e;">Schubkasten</div>
<div class="t" style="top:755px;font-size:16px;color:#3e3e3e;right:820.95px;text-align:right;">(726)</div>
<div style="left:411px;top:790px;width:8px;height:1px;background:repeating-linear-gradient(to right,#808080 0 1px,transparent 1px 2px)"></div>
<div class="tc" style="left:420px;top:784px"></div>
<div class="t" style="top:779px;left:432.80px;font-size:16px;color:#3e3e3e;">Schubkasten mit Glas  2x</div>
<div class="t" style="top:779px;font-size:16px;color:#3e3e3e;right:820.93px;text-align:right;">(10)</div>
<div class="pb" style="left:405px;top:808px"><i class="ph"></i><i class="pv"></i></div>
<div class="tc" style="left:420px;top:808px"></div>
<div class="t" style="top:803px;left:432.80px;font-size:16px;color:#3e3e3e;">Auszug</div>
<div class="t" style="top:803px;font-size:16px;color:#3e3e3e;right:820.93px;text-align:right;">(1878)</div>
<div style="left:411px;top:838px;width:8px;height:1px;background:repeating-linear-gradient(to right,#808080 0 1px,transparent 1px 2px)"></div>
<div class="tc" style="left:420px;top:832px"></div>
<div class="t" style="top:827px;left:432.80px;font-size:16px;color:#3e3e3e;">Klappe mit Glas  1x</div>
<div class="t" style="top:827px;font-size:16px;color:#3e3e3e;right:820.95px;text-align:right;">(136)</div>
<div class="pb" style="left:405px;top:856px"><i class="ph"></i><i class="pv"></i></div>
<div class="tc" style="left:420px;top:856px"></div>
<div class="t" style="top:851px;left:432.80px;font-size:16px;color:#3e3e3e;">Klappe</div>
<div class="t" style="top:851px;font-size:16px;color:#3e3e3e;right:820.95px;text-align:right;">(396)</div>
<div style="left:411px;top:886px;width:8px;height:1px;background:repeating-linear-gradient(to right,#808080 0 1px,transparent 1px 2px)"></div>
<div class="tc" style="left:420px;top:880px"></div>
<div class="t" style="top:875px;left:432.80px;font-size:16px;color:#3e3e3e;">Falttür  1x</div>
<div class="t" style="top:875px;font-size:16px;color:#3e3e3e;right:820.94px;text-align:right;">(2)</div>
<div class="pb" style="left:405px;top:904px"><i class="ph"></i><i class="pv"></i></div>
<div class="tc" style="left:420px;top:904px"></div>
<div class="t" style="top:899px;left:432.80px;font-size:16px;color:#3e3e3e;">Gerätenische</div>
<div class="t" style="top:899px;font-size:16px;color:#3e3e3e;right:820.95px;text-align:right;">(608)</div>
<div style="left:411px;top:934px;width:8px;height:1px;background:repeating-linear-gradient(to right,#808080 0 1px,transparent 1px 2px)"></div>
<div class="tc" style="left:420px;top:928px"></div>
<div class="t" style="top:923px;left:432.80px;font-size:16px;color:#3e3e3e;">Jalousie  1x</div>
<div class="t" style="top:923px;font-size:16px;color:#3e3e3e;right:820.93px;text-align:right;">(47)</div>
<div style="left:411px;top:958px;width:8px;height:1px;background:repeating-linear-gradient(to right,#808080 0 1px,transparent 1px 2px)"></div>
<div class="tc" style="left:420px;top:952px"></div>
<div class="t" style="top:947px;left:432.80px;font-size:16px;color:#3e3e3e;">Glasjalousie  1x</div>
<div class="t" style="top:947px;font-size:16px;color:#3e3e3e;right:820.94px;text-align:right;">(8)</div>
<div class="pb" style="left:405px;top:976px"><i class="ph"></i><i class="pv"></i></div>
<div class="tc" style="left:420px;top:976px"></div>
<div class="t" style="top:971px;left:432.80px;font-size:16px;color:#3e3e3e;">Regal</div>
<div class="t" style="top:971px;font-size:16px;color:#3e3e3e;right:820.95px;text-align:right;">(255)</div>
<div class="pb" style="left:405px;top:1000px"><i class="ph"></i><i class="pv"></i></div>
<div class="tc" style="left:420px;top:1000px"></div>
<div class="t" style="top:995px;left:432.80px;font-size:16px;color:#3e3e3e;">Blende</div>
<div class="t" style="top:995px;font-size:16px;color:#3e3e3e;right:820.93px;text-align:right;">(2344)</div>
<div style="left:779px;top:718px;width:1px;height:326px;background:repeating-linear-gradient(to bottom,#808080 0 1px,transparent 1px 2px)"></div>
<div class="pb" style="left:773px;top:712px"><i class="ph"></i><i class="pv"></i></div>
<div class="tc" style="left:788px;top:712px"></div>
<div class="t" style="top:707px;left:800.80px;font-size:16px;color:#3e3e3e;">Herdnischen</div>
<div class="t" style="top:707px;font-size:16px;color:#3e3e3e;right:452.93px;text-align:right;">(12)</div>
<div class="pb" style="left:773px;top:736px"><i class="ph"></i><i class="pv"></i></div>
<div class="tc" style="left:788px;top:736px"></div>
<div class="t" style="top:731px;left:800.80px;font-size:16px;color:#3e3e3e;">Kochfeld / Kochstelle</div>
<div class="t" style="top:731px;font-size:16px;color:#3e3e3e;right:452.95px;text-align:right;">(226)</div>
<div class="pb" style="left:773px;top:760px"><i class="ph"></i><i class="pv"></i></div>
<div class="tc" style="left:788px;top:760px"></div>
<div class="t" style="top:755px;left:800.80px;font-size:16px;color:#3e3e3e;">Kochfeldfunktion</div>
<div class="t" style="top:755px;font-size:16px;color:#3e3e3e;right:452.93px;text-align:right;">(16)</div>
<div class="pb" style="left:773px;top:784px"><i class="ph"></i><i class="pv"></i></div>
<div class="tc" style="left:788px;top:784px"></div>
<div class="t" style="top:779px;left:800.80px;font-size:16px;color:#3e3e3e;">Backofen-Nische</div>
<div class="t" style="top:779px;font-size:16px;color:#3e3e3e;right:452.95px;text-align:right;">(362)</div>
<div class="pb" style="left:773px;top:808px"><i class="ph"></i><i class="pv"></i></div>
<div class="tc" style="left:788px;top:808px"></div>
<div class="t" style="top:803px;left:800.80px;font-size:16px;color:#3e3e3e;">Mikrowellen-Nische</div>
<div class="t" style="top:803px;font-size:16px;color:#3e3e3e;right:452.95px;text-align:right;">(253)</div>
<div class="pb" style="left:773px;top:832px"><i class="ph"></i><i class="pv"></i></div>
<div class="tc" style="left:788px;top:832px"></div>
<div class="t" style="top:827px;left:800.80px;font-size:16px;color:#3e3e3e;">Dampfgarer-Nische</div>
<div class="t" style="top:827px;font-size:16px;color:#3e3e3e;right:452.95px;text-align:right;">(162)</div>
<div class="pb" style="left:773px;top:856px"><i class="ph"></i><i class="pv"></i></div>
<div class="tc" style="left:788px;top:856px"></div>
<div class="t" style="top:851px;left:800.80px;font-size:16px;color:#3e3e3e;">Kühlschrank-Nische</div>
<div class="t" style="top:851px;font-size:16px;color:#3e3e3e;right:452.95px;text-align:right;">(417)</div>
<div class="pb" style="left:773px;top:880px"><i class="ph"></i><i class="pv"></i></div>
<div class="tc" style="left:788px;top:880px"></div>
<div class="t" style="top:875px;left:800.80px;font-size:16px;color:#3e3e3e;">Gefrierschrank-Nische</div>
<div class="t" style="top:875px;font-size:16px;color:#3e3e3e;right:452.95px;text-align:right;">(9)</div>
<div class="pb" style="left:773px;top:904px"><i class="ph"></i><i class="pv"></i></div>
<div class="tc" style="left:788px;top:904px"></div>
<div class="t" style="top:899px;left:800.80px;font-size:16px;color:#3e3e3e;">Kühl-/Gefrierkombinations-Nische</div>
<div class="t" style="top:899px;font-size:16px;color:#3e3e3e;right:452.93px;text-align:right;">(41)</div>
<div class="pb" style="left:773px;top:928px"><i class="ph"></i><i class="pv"></i></div>
<div class="tc" style="left:788px;top:928px"></div>
<div class="t" style="top:923px;left:800.80px;font-size:16px;color:#3e3e3e;">Geschirrspüler-Nische</div>
<div class="t" style="top:923px;font-size:16px;color:#3e3e3e;right:452.95px;text-align:right;">(105)</div>
<div class="pb" style="left:773px;top:952px"><i class="ph"></i><i class="pv"></i></div>
<div class="tc" style="left:788px;top:952px"></div>
<div class="t" style="top:947px;left:800.80px;font-size:16px;color:#3e3e3e;">Geschirrspüler-Funtkionen</div>
<div class="t" style="top:947px;font-size:16px;color:#3e3e3e;right:452.95px;text-align:right;">(9)</div>
<div class="pb" style="left:773px;top:976px"><i class="ph"></i><i class="pv"></i></div>
<div class="tc" style="left:788px;top:976px"></div>
<div class="t" style="top:971px;left:800.80px;font-size:16px;color:#3e3e3e;">Dunstabzugshaube</div>
<div class="t" style="top:971px;font-size:16px;color:#3e3e3e;right:452.93px;text-align:right;">(42)</div>
<div class="pb" style="left:773px;top:1000px"><i class="ph"></i><i class="pv"></i></div>
<div class="tc" style="left:788px;top:1000px"></div>
<div class="t" style="top:995px;left:800.80px;font-size:16px;color:#3e3e3e;">Elektrogerät</div>
<div class="t" style="top:995px;font-size:16px;color:#3e3e3e;right:452.93px;text-align:right;">(31)</div>
<div class="pb" style="left:773px;top:1024px"><i class="ph"></i><i class="pv"></i></div>
<div class="tc" style="left:788px;top:1024px"></div>
<div class="t" style="top:1019px;left:800.80px;font-size:16px;color:#3e3e3e;">Spülenbereich</div>
<div class="t" style="top:1019px;font-size:16px;color:#3e3e3e;right:452.93px;text-align:right;">(16)</div>
<div style="left:1096px;top:732px;width:26px;height:285px;background:#e6e6e6"></div>
<div style="left:1096px;top:706px;width:26px;height:26px;border:1px solid #bcbcbc;box-sizing:border-box;background:#fdfdfd;"></div>
<div style="left:1096px;top:732px;width:26px;height:160px;border:1px solid #bcbcbc;box-sizing:border-box;background:#fdfdfd;"></div>
<div style="left:1096px;top:1017px;width:26px;height:26px;border:1px solid #bcbcbc;box-sizing:border-box;background:#fdfdfd;"></div>
<svg style="left:1096px;top:706px" width="26" height="26" viewBox="0 0 26 26"><path d="M6.5 16 L12.5 9 L18.5 16 Z" fill="#777"/></svg>
<svg style="left:1096px;top:1017px" width="26" height="26" viewBox="0 0 26 26"><path d="M6.5 10 L12.5 17.5 L18.5 10 Z" fill="#777"/></svg>
<div style="left:1141px;top:709px;width:18px;height:18px;border:1px solid #a3a3a3;box-sizing:border-box;background:#ffffff;"></div>
<div class="t" style="top:708px;left:1172.20px;font-size:16.3px;color:#3e3e3e;">Energieeffizienz F 2021</div>
<div class="t" style="top:709px;font-size:16px;color:#3e3e3e;right:89.75px;text-align:right;">(1)</div>
<div style="left:1141px;top:733px;width:18px;height:18px;border:1px solid #a3a3a3;box-sizing:border-box;background:#ffffff;"></div>
<div class="t" style="top:732px;left:1172.20px;font-size:16.3px;color:#3e3e3e;">Korpusmaterial</div>
<div class="t" style="top:733px;font-size:16px;color:#3e3e3e;right:89.73px;text-align:right;">(19)</div>
<div style="left:1141px;top:757px;width:18px;height:18px;border:1px solid #a3a3a3;box-sizing:border-box;background:#ffffff;"></div>
<div class="t" style="top:756px;left:1172.20px;font-size:16.3px;color:#3e3e3e;">Glas</div>
<div class="t" style="top:757px;font-size:16px;color:#3e3e3e;right:89.73px;text-align:right;">(83)</div>
<div style="left:1141px;top:781px;width:18px;height:18px;border:1px solid #a3a3a3;box-sizing:border-box;background:#ffffff;"></div>
<div class="t" style="top:780px;left:1172.20px;font-size:16.3px;color:#3e3e3e;">Weiß</div>
<div class="t" style="top:781px;font-size:16px;color:#3e3e3e;right:89.75px;text-align:right;">(9)</div>
<div style="left:1141px;top:805px;width:18px;height:18px;border:1px solid #a3a3a3;box-sizing:border-box;background:#ffffff;"></div>
<div class="t" style="top:804px;left:1172.20px;font-size:16.3px;color:#3e3e3e;">Schwarz</div>
<div class="t" style="top:805px;font-size:16px;color:#3e3e3e;right:89.75px;text-align:right;">(102)</div>
<div style="left:1141px;top:829px;width:18px;height:18px;border:1px solid #a3a3a3;box-sizing:border-box;background:#ffffff;"></div>
<div class="t" style="top:828px;left:1172.20px;font-size:16.3px;color:#3e3e3e;">Aluminium, alufarbig</div>
<div class="t" style="top:829px;font-size:16px;color:#3e3e3e;right:89.73px;text-align:right;">(91)</div>
<div style="left:1141px;top:853px;width:18px;height:18px;border:1px solid #a3a3a3;box-sizing:border-box;background:#ffffff;"></div>
<div class="t" style="top:852px;left:1172.20px;font-size:16.3px;color:#3e3e3e;">Edelstahl, edelstahlfarbig</div>
<div class="t" style="top:853px;font-size:16px;color:#3e3e3e;right:89.73px;text-align:right;">(84)</div>
<div style="left:1141px;top:877px;width:18px;height:18px;border:1px solid #a3a3a3;box-sizing:border-box;background:#ffffff;"></div>
<div class="t" style="top:876px;left:1172.20px;font-size:16.3px;color:#3e3e3e;">Kunststoff</div>
<div class="t" style="top:877px;font-size:16px;color:#3e3e3e;right:89.73px;text-align:right;">(43)</div>
<div style="left:1141px;top:901px;width:18px;height:18px;border:1px solid #a3a3a3;box-sizing:border-box;background:#ffffff;"></div>
<div class="t" style="top:900px;left:1172.20px;font-size:16.3px;color:#3e3e3e;">Massivholz</div>
<div class="t" style="top:901px;font-size:16px;color:#3e3e3e;right:89.75px;text-align:right;">(5)</div>
<div style="left:1141px;top:925px;width:18px;height:18px;border:1px solid #a3a3a3;box-sizing:border-box;background:#ffffff;"></div>
<div class="t" style="top:924px;left:1172.20px;font-size:16.3px;color:#3e3e3e;">Verbundwerkstoffe</div>
<div class="t" style="top:925px;font-size:16px;color:#3e3e3e;right:89.73px;text-align:right;">(21)</div>
<div style="left:1141px;top:949px;width:18px;height:18px;border:1px solid #a3a3a3;box-sizing:border-box;background:#ffffff;"></div>
<div class="t" style="top:948px;left:1172.20px;font-size:16.3px;color:#3e3e3e;">Motiv</div>
<div class="t" style="top:949px;font-size:16px;color:#3e3e3e;right:89.75px;text-align:right;">(3)</div>
<div style="left:1141px;top:973px;width:18px;height:18px;border:1px solid #a3a3a3;box-sizing:border-box;background:#ffffff;"></div>
<div class="t" style="top:972px;left:1172.20px;font-size:16.3px;color:#3e3e3e;">Landhausstil</div>
<div class="t" style="top:973px;font-size:16px;color:#3e3e3e;right:89.73px;text-align:right;">(17)</div>
<div style="left:1141px;top:997px;width:18px;height:18px;border:1px solid #a3a3a3;box-sizing:border-box;background:#ffffff;"></div>
<div class="t" style="top:996px;left:1172.20px;font-size:16.3px;color:#3e3e3e;">Insellösung</div>
<div class="t" style="top:997px;font-size:16px;color:#3e3e3e;right:89.75px;text-align:right;">(4)</div>
<div style="left:1141px;top:1021px;width:18px;height:18px;border:1px solid #a3a3a3;box-sizing:border-box;background:#ffffff;"></div>
<div class="t" style="top:1020px;left:1172.20px;font-size:16.3px;color:#3e3e3e;">Wand(montage)</div>
<div class="t" style="top:1021px;font-size:16px;color:#3e3e3e;right:89.75px;text-align:right;">(6)</div>
<div style="left:1464px;top:732px;width:26px;height:285px;background:#e6e6e6"></div>
<div style="left:1464px;top:706px;width:26px;height:26px;border:1px solid #bcbcbc;box-sizing:border-box;background:#fdfdfd;"></div>
<div style="left:1464px;top:732px;width:26px;height:160px;border:1px solid #bcbcbc;box-sizing:border-box;background:#fdfdfd;"></div>
<div style="left:1464px;top:1017px;width:26px;height:26px;border:1px solid #bcbcbc;box-sizing:border-box;background:#fdfdfd;"></div>
<svg style="left:1464px;top:706px" width="26" height="26" viewBox="0 0 26 26"><path d="M6.5 16 L12.5 9 L18.5 16 Z" fill="#777"/></svg>
<svg style="left:1464px;top:1017px" width="26" height="26" viewBox="0 0 26 26"><path d="M6.5 10 L12.5 17.5 L18.5 10 Z" fill="#777"/></svg>
<div style="left:17px;top:1079px;width:225px;height:35px;border:1px solid #a0a0a0;box-sizing:border-box;background:#fdfdfd;"></div>
<div class="t" style="top:1087px;font-size:16.9px;color:#3e3e3e;left:52.84px;">Suche zurücksetzen</div>
<div style="left:1266px;top:1069px;width:123px;height:55px;border:3px solid #d4da2a;box-sizing:border-box;border-radius:2px"></div>
<div style="left:1272px;top:1079px;width:113px;height:35px;border:1px solid #0d3a5e;box-sizing:border-box;background:#fdfdfd;"></div>
<div class="t" style="top:1087px;font-size:16.6px;color:#3e3e3e;left:1316.15px;">OK</div>
<div style="left:1394px;top:1079px;width:113px;height:35px;border:1px solid #a0a0a0;box-sizing:border-box;background:#fdfdfd;"></div>
<div class="t" style="top:1086px;font-size:16.5px;color:#3e3e3e;left:1410.30px;">Abbrechen</div>
<div style="left:1516px;top:1119px;width:3px;height:3px;background:#b5b5b5"></div>
<div style="left:1512px;top:1123px;width:3px;height:3px;background:#b5b5b5"></div>
<div style="left:1516px;top:1123px;width:3px;height:3px;background:#b5b5b5"></div>
<div style="left:1508px;top:1127px;width:3px;height:3px;background:#b5b5b5"></div>
<div style="left:1512px;top:1127px;width:3px;height:3px;background:#b5b5b5"></div>
<div style="left:1516px;top:1127px;width:3px;height:3px;background:#b5b5b5"></div></body></html>
